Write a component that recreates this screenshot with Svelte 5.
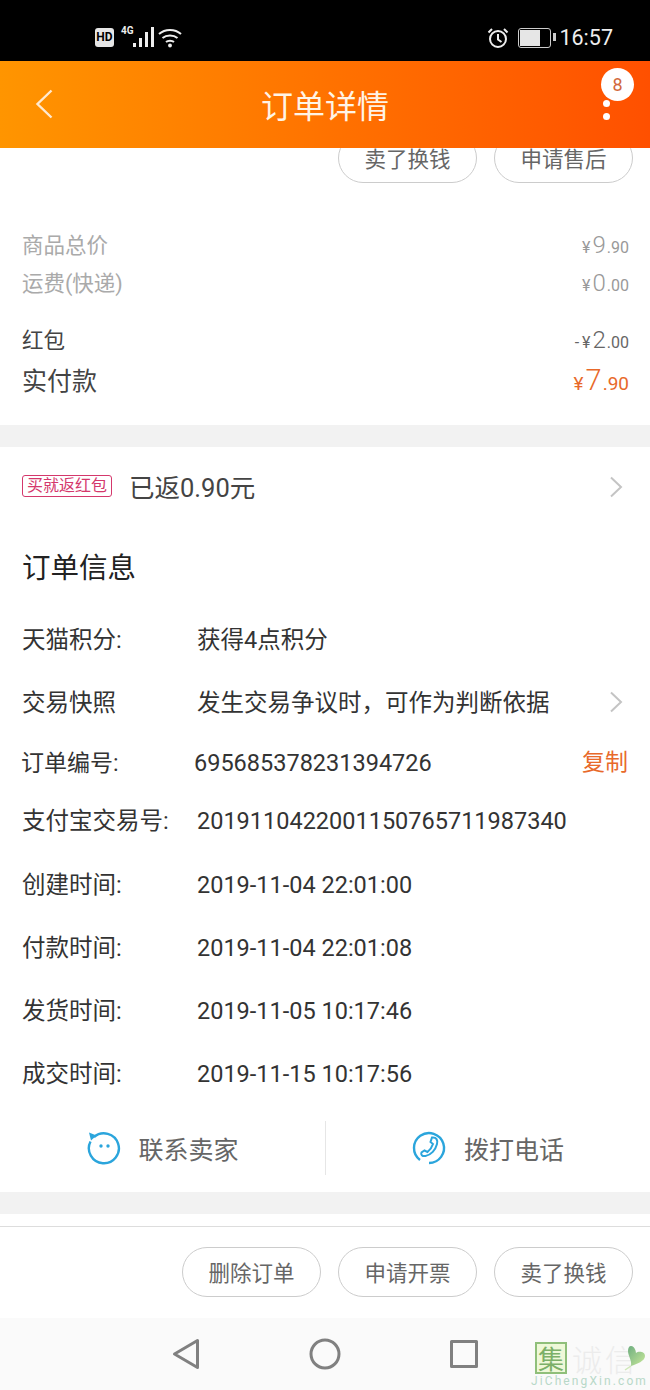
<script>
  const prices = [
    { label: "商品总价", int: "9", dec: "90" },
    { label: "运费(快递)", int: "0", dec: "00" }
  ];
  const times = [
    ["创建时间:", "2019-11-04 22:01:00"],
    ["付款时间:", "2019-11-04 22:01:08"],
    ["发货时间:", "2019-11-05 10:17:46"],
    ["成交时间:", "2019-11-15 10:17:56"]
  ];
</script>

<div class="page">
  <div class="status">
    <div class="status-left">
      <span class="hd">HD</span>
      <span class="net">4G</span>
      <svg class="signal" width="21" height="22" viewBox="0 0 21 22" fill="#eee">
        <rect x="0" y="17" width="3" height="4" />
        <rect x="6" y="12" width="3" height="9" />
        <rect x="12" y="6" width="3" height="15" />
        <rect x="18" y="1" width="3" height="20" />
      </svg>
      <svg class="wifi" width="24" height="22" viewBox="0 0 24 22" fill="none" stroke="#eee" stroke-width="2">
        <path d="M1 7C7 1.500 17 1.500 23 7" />
        <path d="M4.500 11C8.500 7.500 15.500 7.500 19.500 11" />
        <path d="M8 15C10 13.300 14 13.300 16 15" />
        <circle cx="12" cy="18.500" r="1.900" fill="#eee" stroke="none" />
      </svg>
    </div>
    <div class="status-right">
      <svg width="22" height="22" viewBox="0 0 22 22" fill="none" stroke="#eee" stroke-width="2">
        <circle cx="11" cy="12" r="8" />
        <path d="M11 7V12.500L14.500 15" />
        <path d="M1.500 5.500L5 2M20.500 5.500L17 2" />
      </svg>
      <span class="battery"><i></i></span>
      <span class="clock">16:57</span>
    </div>
  </div>

  <header class="nav">
    <svg class="back" width="18" height="30" viewBox="0 0 18 30" fill="none" stroke="#ffe9cf" stroke-width="2.400">
      <path d="M16.500 1.500L2.500 15L16.500 28.500" />
    </svg>
    <h1>订单详情</h1>
    <div class="more">
      <span class="dot"></span>
      <span class="dot"></span>
      <span class="badge">8</span>
    </div>
  </header>

  <div class="cut-actions">
    <button>卖了换钱</button>
    <button>申请售后</button>
  </div>

  <section class="prices">
    {#each prices as p}
      <div class="price-row muted">
        <span>{p.label}</span>
        <span class="money"><small>¥</small><b>{p.int}</b><small>.{p.dec}</small></span>
      </div>
    {/each}
    <div class="price-row packet">
      <span>红包</span>
      <span class="money"><small class="minus">-</small><small>¥</small><b>2</b><small>.00</small></span>
    </div>
    <div class="price-row paid">
      <span>实付款</span>
      <span class="money total"><small>¥</small><b>7</b><small>.90</small></span>
    </div>
  </section>

  <div class="gap"></div>

  <section class="info">
    <div class="rebate">
      <span class="tag">买就返红包</span>
      <span class="rebate-text">已返0.90元</span>
      <svg class="chev" width="14" height="22" viewBox="0 0 14 22" fill="none" stroke="#c4c4c4" stroke-width="2">
        <path d="M2 1.500L12 11L2 20.500" />
      </svg>
    </div>

    <h2>订单信息</h2>

    <div class="row"><span class="key">天猫积分:</span><span>获得4点积分</span></div>
    <div class="row">
      <span class="key">交易快照</span><span>发生交易争议时，可作为判断依据</span>
      <svg class="chev snapshot" width="14" height="22" viewBox="0 0 14 22" fill="none" stroke="#c4c4c4" stroke-width="2">
        <path d="M2 1.500L12 11L2 20.500" />
      </svg>
    </div>
    <div class="row serial">
      <span class="key">订单编号:</span><span>695685378231394726</span>
      <span class="copy">复制</span>
    </div>
    <div class="row trade"><span class="key">支付宝交易号:</span><span>2019110422001150765711987340</span></div>
    {#each times as [k, v]}
      <div class="row"><span class="key">{k}</span><span>{v}</span></div>
    {/each}

    <div class="contact">
      <div class="contact-item">
        <svg width="36" height="36" viewBox="0 0 36 36" fill="none" stroke="#2ba5dc" stroke-width="2.400">
          <path d="M8 7A15 15 0 1 1 4.500 11.500" />
          <path d="M3 2.500L10.500 5.500L5 10.500Z" fill="#2ba5dc" stroke="none" />
          <circle cx="15" cy="16" r="1.700" fill="#2ba5dc" stroke="none" />
          <circle cx="22" cy="16" r="1.700" fill="#2ba5dc" stroke="none" />
        </svg>
        <span>联系卖家</span>
      </div>
      <div class="contact-item">
        <svg width="36" height="36" viewBox="0 0 36 36" fill="none" stroke="#2ba5dc" stroke-width="2.400">
          <path d="M8 30A15 15 0 1 1 17 33" />
          <path d="M20 7.500C24.500 7 26 10 25 14C23.500 20 19 25 13.500 26C10 26.500 8.500 24.500 9.500 22.500L12.500 20.500L15.500 22C18 20 20 17 21 14L18.500 12Z" stroke-width="2" />
        </svg>
        <span>拨打电话</span>
      </div>
    </div>
  </section>

  <div class="gap"></div>

  <footer class="actions">
    <button>删除订单</button>
    <button>申请开票</button>
    <button>卖了换钱</button>
  </footer>

  <nav class="softkeys">
    <svg width="28" height="32" viewBox="0 0 28 32" fill="none" stroke="#808080" stroke-width="3" stroke-linejoin="round">
      <path d="M25.500 2.500V29.500L2.500 16Z" />
    </svg>
    <svg width="32" height="32" viewBox="0 0 32 32" fill="none" stroke="#808080" stroke-width="3">
      <circle cx="16" cy="16" r="14" />
    </svg>
    <svg width="28" height="28" viewBox="0 0 28 28" fill="none" stroke="#808080" stroke-width="3" stroke-linejoin="round">
      <rect x="1.500" y="1.500" width="25" height="25" />
    </svg>
    <div class="mark">
      <div class="mark-top">
        <span class="mark-ji">集</span>
        <span class="mark-cx">诚信</span>
        <svg class="heart" width="22" height="26" viewBox="0 0 22 26">
          <defs>
            <linearGradient id="leaf" x1="0" y1="0" x2="1" y2="1">
              <stop offset="0" stop-color="#6fae80" />
              <stop offset="1" stop-color="#c8e89a" />
            </linearGradient>
          </defs>
          <path d="M7 1C11 1 12 7 12 8C14 6 21 6 21 11C21 16 13 19 7 21C8 15 4 11 4 6C4 3 5 1 7 1Z" fill="url(#leaf)" />
          <path d="M7 21L1 25" stroke="#cfe8b8" stroke-width="1.500" fill="none" />
        </svg>
      </div>
      <div class="mark-url">JiChengXin.com</div>
    </div>
  </nav>
</div>

<style>
  :global(body) {
    background: #fff;
  }

  .page {
    width: 650px;
    height: 1390px;
    overflow: hidden;
    display: flex;
    flex-direction: column;
    font-family: Roboto, "Noto Sans CJK SC", sans-serif;
    color: #333;
  }

  .status {
    height: 61px;
    flex: none;
    box-sizing: border-box;
    background: #000;
    color: #eee;
    padding: 25px 37px 0 95px;
    display: flex;
    justify-content: space-between;
    align-items: flex-start;
  }
  .status-left {
    display: flex;
    align-items: flex-start;
  }
  .hd {
    width: 19px;
    height: 19px;
    margin-top: 3px;
    background: #e6e6e6;
    border-radius: 3px;
    color: #000;
    font: 700 12px/19px Roboto, sans-serif;
    text-align: center;
  }
  .net {
    font: 700 10px/12px Roboto, sans-serif;
    margin-left: 7px;
  }
  .signal {
    margin: 1px 0 0 -1px;
  }
  .wifi {
    margin: 2px 0 0 4px;
  }
  .status-right {
    display: flex;
    align-items: center;
  }
  .battery {
    position: relative;
    width: 29px;
    height: 16px;
    margin-left: 9px;
    border: 1.500px solid #ccc;
    border-radius: 3px;
    padding: 1px;
    box-sizing: content-box;
  }
  .battery::after {
    content: "";
    position: absolute;
    right: -6px;
    top: 4px;
    width: 3px;
    height: 8px;
    background: #ccc;
  }
  .battery i {
    display: block;
    width: 20px;
    height: 16px;
    background: #e6e6e6;
  }
  .clock {
    margin-left: 8px;
    font-size: 21.500px;
    line-height: 26px;
    color: #eee;
  }

  .nav {
    height: 87px;
    flex: none;
    position: relative;
    z-index: 1;
    display: flex;
    align-items: center;
    justify-content: center;
    background: linear-gradient(90deg, #ff9500, #ff5000);
  }
  .back {
    position: absolute;
    left: 35px;
    top: 28px;
  }
  h1 {
    margin: -2px 0 0;
    font-size: 32px;
    font-weight: 400;
    color: #fff4e6;
  }
  .more {
    position: absolute;
    left: 603px;
    top: 39px;
    width: 8px;
    display: flex;
    flex-direction: column;
    gap: 6px;
  }
  .dot {
    width: 7px;
    height: 7px;
    border-radius: 50%;
    background: #fff;
  }
  .badge {
    position: absolute;
    left: -2px;
    top: -32px;
    width: 33px;
    height: 33px;
    border-radius: 50%;
    background: #fff;
    color: #d2693c;
    font-size: 18px;
    line-height: 33px;
    text-align: center;
  }

  button {
    width: 139px;
    height: 50px;
    flex: none;
    box-sizing: border-box;
    padding: 0 0 1px;
    background: #fff;
    border: 1px solid #ccc;
    border-radius: 25px;
    color: #666;
    font: 21.500px "Noto Sans CJK SC", sans-serif;
  }

  .cut-actions {
    height: 35px;
    flex: none;
    overflow: hidden;
    display: flex;
    justify-content: flex-end;
    align-items: flex-end;
    gap: 17px;
    padding-right: 17px;
  }

  .prices {
    height: 242px;
    flex: none;
    box-sizing: border-box;
    padding: 43px 21px 0 22px;
  }
  .price-row {
    display: flex;
    justify-content: space-between;
    align-items: baseline;
    height: 38px;
    line-height: 38px;
    font-size: 21.500px;
  }
  .price-row.muted {
    color: #aaa;
  }
  .price-row.packet {
    margin-top: 19px;
    color: #444;
  }
  .price-row.paid {
    margin-top: -1px;
    height: 44px;
    line-height: 44px;
    font-size: 25px;
    color: #444;
  }
  .money {
    display: flex;
    align-items: baseline;
    color: #999;
  }
  .packet .money {
    color: #666;
  }
  .money small {
    font-size: 16px;
  }
  .money .minus {
    margin-right: 3px;
  }
  .money b {
    font-weight: 300;
    font-size: 24px;
    margin: 0 1px 0 2px;
  }
  .money.total {
    color: #e8692a;
  }
  .money.total small {
    font-size: 19px;
  }
  .money.total b {
    font-size: 29px;
  }

  .gap {
    height: 22px;
    flex: none;
    background: #f2f2f2;
  }

  .info {
    height: 745px;
    flex: none;
  }
  .rebate {
    height: 80px;
    display: flex;
    align-items: center;
    position: relative;
    padding-left: 22px;
  }
  .tag {
    box-sizing: border-box;
    width: 90px;
    height: 22px;
    border: 1px solid #d4386c;
    border-radius: 3px;
    color: #d4386c;
    font-size: 16px;
    line-height: 19px;
    text-align: center;
    margin-top: -2px;
  }
  .rebate-text {
    margin: -4px 0 0 17px;
    font-size: 25.500px;
    color: #444;
  }
  .chev {
    position: absolute;
    left: 609px;
    top: 50%;
    margin-top: -11px;
  }
  .chev.snapshot {
    margin-top: -13px;
  }
  h2 {
    margin: 0;
    height: 82px;
    padding-left: 22px;
    font-size: 28.500px;
    font-weight: 400;
    line-height: 84px;
    color: #222;
  }
  .row {
    position: relative;
    height: 63px;
    line-height: 63px;
    display: flex;
    align-items: baseline;
    padding-left: 22px;
    font-size: 23.500px;
    color: #333;
  }
  .key {
    width: 175px;
    flex: none;
    white-space: nowrap;
  }
  .row.serial {
    height: 56px;
    line-height: 56px;
    padding-left: 21px;
  }
  .serial .key {
    width: 173px;
    font-size: 23px;
  }
  .row.trade {
    line-height: 61px;
  }
  .copy {
    position: absolute;
    right: 22px;
    top: 0;
    font-size: 23px;
    color: #e8692a;
  }

  .contact {
    height: 86px;
    margin-top: -1px;
    display: grid;
    grid-template-columns: 1fr 1fr;
    align-items: center;
  }
  .contact-item {
    display: flex;
    align-items: center;
    justify-content: center;
    gap: 16px;
    height: 54px;
    font-size: 25px;
    color: #666;
  }
  .contact-item + .contact-item {
    border-left: 1px solid #e6e6e6;
  }

  .actions {
    height: 92px;
    flex: none;
    box-sizing: border-box;
    margin-top: 12px;
    border-top: 1px solid #ddd;
    padding: 20px 17px 0 0;
    display: flex;
    justify-content: flex-end;
    align-items: flex-start;
    gap: 17px;
  }

  .softkeys {
    position: relative;
    flex: 1;
    background: #fafafa;
    display: flex;
    align-items: center;
    gap: 109px;
    padding-left: 172px;
  }
  .mark {
    position: absolute;
    left: 531px;
    top: 24px;
  }
  .mark-top {
    position: relative;
    display: flex;
    align-items: center;
  }
  .mark-ji {
    width: 32px;
    height: 32px;
    box-sizing: border-box;
    border: 2px solid #8fbf7a;
    background: #eef8d8;
    color: #7cb068;
    font: 26px/27px "Noto Sans CJK SC", sans-serif;
    text-align: center;
    margin-left: 4px;
  }
  .mark-cx {
    margin-left: 5px;
    font: 200 30px/32px "Noto Sans CJK SC", sans-serif;
    letter-spacing: 3px;
    color: #ececec;
    white-space: nowrap;
  }
  .heart {
    position: absolute;
    left: 93px;
    top: 3px;
  }
  .mark-url {
    font: 12px/14px Roboto, sans-serif;
    letter-spacing: 2.100px;
    color: #b8d8c8;
    white-space: nowrap;
  }
</style>
